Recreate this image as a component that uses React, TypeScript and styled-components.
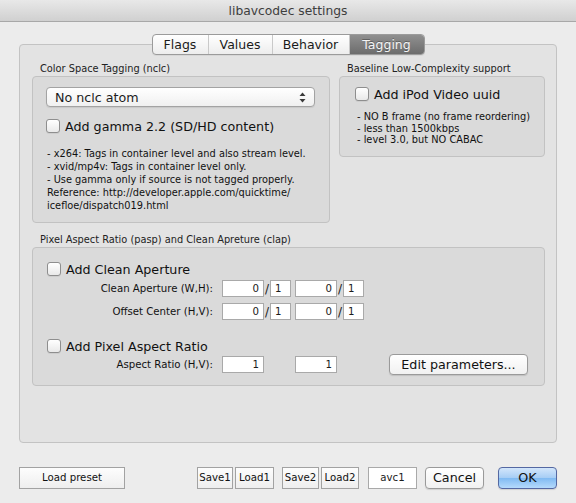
import React from "react";
import styled, { createGlobalStyle } from "styled-components";

const GlobalStyle = createGlobalStyle`
  html, body {
    margin: 0;
    padding: 0;
    background: #ececec;
  }
  body {
    font-family: "DejaVu Sans", "Liberation Sans", sans-serif;
    color: #1c1c1c;
  }
`;

const Window = styled.div`
  width: 576px;
  height: 503px;
  background: #ececec;
  display: flex;
  flex-direction: column;
  overflow: hidden;
`;

const TitleBar = styled.div`
  height: 21px;
  flex: none;
  border-bottom: 1px solid #a8a8a8;
  background: linear-gradient(#e8e8e8, #d0d0d0);
  display: flex;
  align-items: center;
  justify-content: center;
  font-size: 12.3px;
  color: #3e3e3e;
`;

const Body = styled.div`
  padding: 0 19px;
  display: flex;
  flex-direction: column;
`;

const TabBar = styled.div`
  margin-top: 12px;
  align-self: center;
  display: flex;
  height: 19px;
  flex: none;
  border: 1px solid #9b9b9b;
  border-radius: 4px;
  overflow: hidden;
  position: relative;
  z-index: 1;
  background: linear-gradient(#ffffff, #ededed);
  box-shadow: 0 1px 0 rgba(0, 0, 0, 0.05);
`;

const Tab = styled.div<{ $w: number; $active?: boolean; $last?: boolean }>`
  width: ${(p) => p.$w}px;
  display: flex;
  align-items: center;
  justify-content: center;
  font-size: 12.5px;
  color: ${(p) => (p.$active ? "#f4f4f4" : "#1a1a1a")};
  background: ${(p) =>
    p.$active ? "linear-gradient(#909090, #6c6c6c)" : "transparent"};
  text-shadow: ${(p) => (p.$active ? "0 -1px 0 rgba(0,0,0,0.3)" : "none")};
  border-right: ${(p) => (p.$last ? "none" : "1px solid #c9c9c9")};
  box-sizing: border-box;
`;

const Panel = styled.div`
  margin-top: -11px;
  height: 399px;
  flex: none;
  box-sizing: border-box;
  border: 1px solid #c3c3c3;
  border-radius: 4px;
  background: #e3e3e3;
  padding: 17px 11px 0 12px;
  display: flex;
  flex-direction: column;
`;

const TopRow = styled.div`
  display: flex;
  gap: 9px;
  align-items: flex-start;
`;

const Group = styled.div<{ $w?: number; $mt?: number }>`
  width: ${(p) => (p.$w ? `${p.$w}px` : "auto")};
  margin-top: ${(p) => p.$mt ?? 0}px;
  display: flex;
  flex-direction: column;
`;

const GroupLabel = styled.div`
  height: 14px;
  line-height: 14px;
  padding-left: 8px;
  font-size: 9.8px;
  color: #222;
`;

const GroupBox = styled.div<{ $h: number; $pad: string }>`
  height: ${(p) => p.$h}px;
  box-sizing: border-box;
  border: 1px solid #c2c2c2;
  border-radius: 4px;
  background: #dadada;
  padding: ${(p) => p.$pad};
  display: flex;
  flex-direction: column;
`;

const Popup = styled.div`
  width: 269px;
  height: 20px;
  box-sizing: border-box;
  border: 1px solid #a3a3a3;
  border-radius: 4px;
  background: linear-gradient(#ffffff, #f0f0f0);
  box-shadow: 0 1px 1px rgba(0, 0, 0, 0.08);
  display: flex;
  align-items: center;
  justify-content: space-between;
  padding: 0 8px 0 8px;
  font-size: 12.7px;
`;

const CheckRow = styled.label<{ $mt?: number }>`
  display: flex;
  align-items: center;
  gap: 5px;
  height: 14px;
  margin-top: ${(p) => p.$mt ?? 0}px;
  font-size: 12.7px;
  color: #111;
`;

const Box = styled.span`
  width: 14px;
  height: 14px;
  box-sizing: border-box;
  border: 1px solid #8e8e8e;
  border-radius: 3px;
  background: linear-gradient(#ffffff, #e9e9e9);
  box-shadow: 0 1px 0 rgba(0, 0, 0, 0.06);
  flex: none;
`;

const Notes = styled.div<{ $mt: number; $lh: number; $pl: number }>`
  margin-top: ${(p) => p.$mt}px;
  padding-left: ${(p) => p.$pl}px;
  font-size: 9.8px;
  line-height: ${(p) => p.$lh}px;
  color: #111;
  white-space: pre;
`;

const FieldGrid = styled.div<{ $mt: number }>`
  margin-top: ${(p) => p.$mt}px;
  display: grid;
  grid-template-columns: 166px auto;
  column-gap: 9px;
  row-gap: 6px;
  align-items: center;
`;

const FieldLabel = styled.div`
  text-align: right;
  font-size: 10.2px;
  color: #111;
`;

const Fields = styled.div`
  display: flex;
  align-items: center;
  height: 17px;
`;

const Field = styled.div<{ $w: number; $left?: boolean; $mr?: number }>`
  width: ${(p) => p.$w}px;
  height: 17px;
  box-sizing: border-box;
  border: 1px solid #a9a9a9;
  background: #ffffff;
  font-size: 10.2px;
  line-height: 15px;
  padding: 0 4px;
  text-align: ${(p) => (p.$left ? "left" : "right")};
  margin-right: ${(p) => p.$mr ?? 0}px;
`;

const Slash = styled.span`
  width: 6px;
  text-align: center;
  font-size: 12px;
`;

const PushButton = styled.div<{ $w: number; $h?: number; $blue?: boolean }>`
  width: ${(p) => p.$w}px;
  height: ${(p) => p.$h ?? 21}px;
  box-sizing: border-box;
  border: 1px solid ${(p) => (p.$blue ? "#5468a2" : "#9a9a9a")};
  border-radius: 4px;
  background: ${(p) =>
    p.$blue
      ? "linear-gradient(#d3e6fb 0%, #a6cdf5 50%, #80baf2 51%, #b5dafc 100%)"
      : "linear-gradient(#ffffff, #f1f1f1)"};
  box-shadow: 0 1px 1px rgba(0, 0, 0, 0.12);
  display: flex;
  align-items: center;
  justify-content: center;
  font-size: 12.7px;
  color: #111;
`;

const Row3 = styled.div`
  display: flex;
  align-items: center;
`;

const BottomBar = styled.div`
  margin-top: 23px;
  display: flex;
  align-items: center;
  justify-content: space-between;
  height: 23px;
`;

const SquareButton = styled.div<{ $w: number }>`
  width: ${(p) => p.$w}px;
  height: 22px;
  box-sizing: border-box;
  border: 1px solid #a2a2a2;
  background: linear-gradient(#fdfdfd, #eeeeee);
  display: flex;
  align-items: center;
  justify-content: center;
  font-size: 10.2px;
  color: #111;
`;

const Cluster = styled.div`
  display: flex;
  align-items: center;
`;

const Pair = styled.div<{ $mr: number }>`
  display: flex;
  gap: 2px;
  margin-right: ${(p) => p.$mr}px;
`;

const CodeField = styled.div`
  width: 49px;
  height: 22px;
  box-sizing: border-box;
  border: 1px solid #a9a9a9;
  background: #fff;
  display: flex;
  align-items: center;
  justify-content: center;
  font-size: 10.2px;
  margin-right: 8px;
`;

const Spacer = styled.div<{ $w: number }>`
  width: ${(p) => p.$w}px;
`;

const Arrows = () => (
  <svg width="7" height="11" viewBox="0 0 7 11">
    <path d="M3.5 0.5 L6.5 4 L0.5 4 Z" fill="#3a3a3a" />
    <path d="M3.5 10.5 L6.5 7 L0.5 7 Z" fill="#3a3a3a" />
  </svg>
);

const Check = ({ label, mt }: { label: string; mt?: number }) => (
  <CheckRow $mt={mt}>
    <Box />
    {label}
  </CheckRow>
);

export default function App() {
  return (
    <Window>
      <GlobalStyle />
      <TitleBar>libavcodec settings</TitleBar>
      <Body>
        <TabBar>
          <Tab $w={56}>Flags</Tab>
          <Tab $w={64}>Values</Tab>
          <Tab $w={77}>Behavior</Tab>
          <Tab $w={74} $active $last>
            Tagging
          </Tab>
        </TabBar>
        <Panel>
          <TopRow>
            <Group $w={298}>
              <GroupLabel>Color Space Tagging (nclc)</GroupLabel>
              <GroupBox $h={147} $pad="10px 0 0 13px">
                <Popup>
                  <span>No nclc atom</span>
                  <Arrows />
                </Popup>
                <Check label="Add gamma 2.2 (SD/HD content)" mt={12} />
                <Notes $mt={14} $lh={13} $pl={1}>
                  {"- x264: Tags in container level and also stream level.\n" +
                    "- xvid/mp4v: Tags in container level only.\n" +
                    "- Use gamma only if source is not tagged properly.\n" +
                    "Reference: http://developer.apple.com/quicktime/\n" +
                    "icefloe/dispatch019.html"}
                </Notes>
              </GroupBox>
            </Group>
            <Group $w={206}>
              <GroupLabel>Baseline Low-Complexity support</GroupLabel>
              <GroupBox $h={81} $pad="10px 0 0 15px">
                <Check label="Add iPod Video uuid" />
                <Notes $mt={10} $lh={11.5} $pl={2}>
                  {"- NO B frame (no frame reordering)\n" +
                    "- less than 1500kbps\n" +
                    "- level 3.0, but NO CABAC"}
                </Notes>
              </GroupBox>
            </Group>
          </TopRow>
          <Group $mt={10}>
            <GroupLabel>Pixel Aspect Ratio (pasp) and Clean Apreture (clap)</GroupLabel>
            <GroupBox $h={139} $pad="14px 0 0 14px">
              <Check label="Add Clean Aperture" />
              <FieldGrid $mt={4}>
                <FieldLabel>Clean Aperture (W,H):</FieldLabel>
                <Fields>
                  <Field $w={42}>0</Field>
                  <Slash>/</Slash>
                  <Field $w={21} $left $mr={4}>
                    1
                  </Field>
                  <Field $w={42}>0</Field>
                  <Slash>/</Slash>
                  <Field $w={21} $left>
                    1
                  </Field>
                </Fields>
                <FieldLabel>Offset Center (H,V):</FieldLabel>
                <Fields>
                  <Field $w={42}>0</Field>
                  <Slash>/</Slash>
                  <Field $w={21} $left $mr={4}>
                    1
                  </Field>
                  <Field $w={42}>0</Field>
                  <Slash>/</Slash>
                  <Field $w={21} $left>
                    1
                  </Field>
                </Fields>
              </FieldGrid>
              <Check label="Add Pixel Aspect Ratio" mt={19} />
              <FieldGrid $mt={1}>
                <FieldLabel>Aspect Ratio (H,V):</FieldLabel>
                <Row3>
                  <Field $w={42} $mr={31}>
                    1
                  </Field>
                  <Field $w={42} $mr={52}>
                    1
                  </Field>
                  <PushButton $w={139}>Edit parameters...</PushButton>
                </Row3>
              </FieldGrid>
            </GroupBox>
          </Group>
        </Panel>
        <BottomBar>
          <SquareButton $w={106}>Load preset</SquareButton>
          <Cluster>
            <Pair $mr={8}>
              <SquareButton $w={36}>Save1</SquareButton>
              <SquareButton $w={39}>Load1</SquareButton>
            </Pair>
            <Pair $mr={9}>
              <SquareButton $w={37}>Save2</SquareButton>
              <SquareButton $w={38}>Load2</SquareButton>
            </Pair>
            <CodeField>avc1</CodeField>
            <PushButton $w={59} $h={22}>
              Cancel
            </PushButton>
            <Spacer $w={14} />
            <PushButton $w={59} $h={22} $blue>
              OK
            </PushButton>
          </Cluster>
        </BottomBar>
      </Body>
    </Window>
  );
}
